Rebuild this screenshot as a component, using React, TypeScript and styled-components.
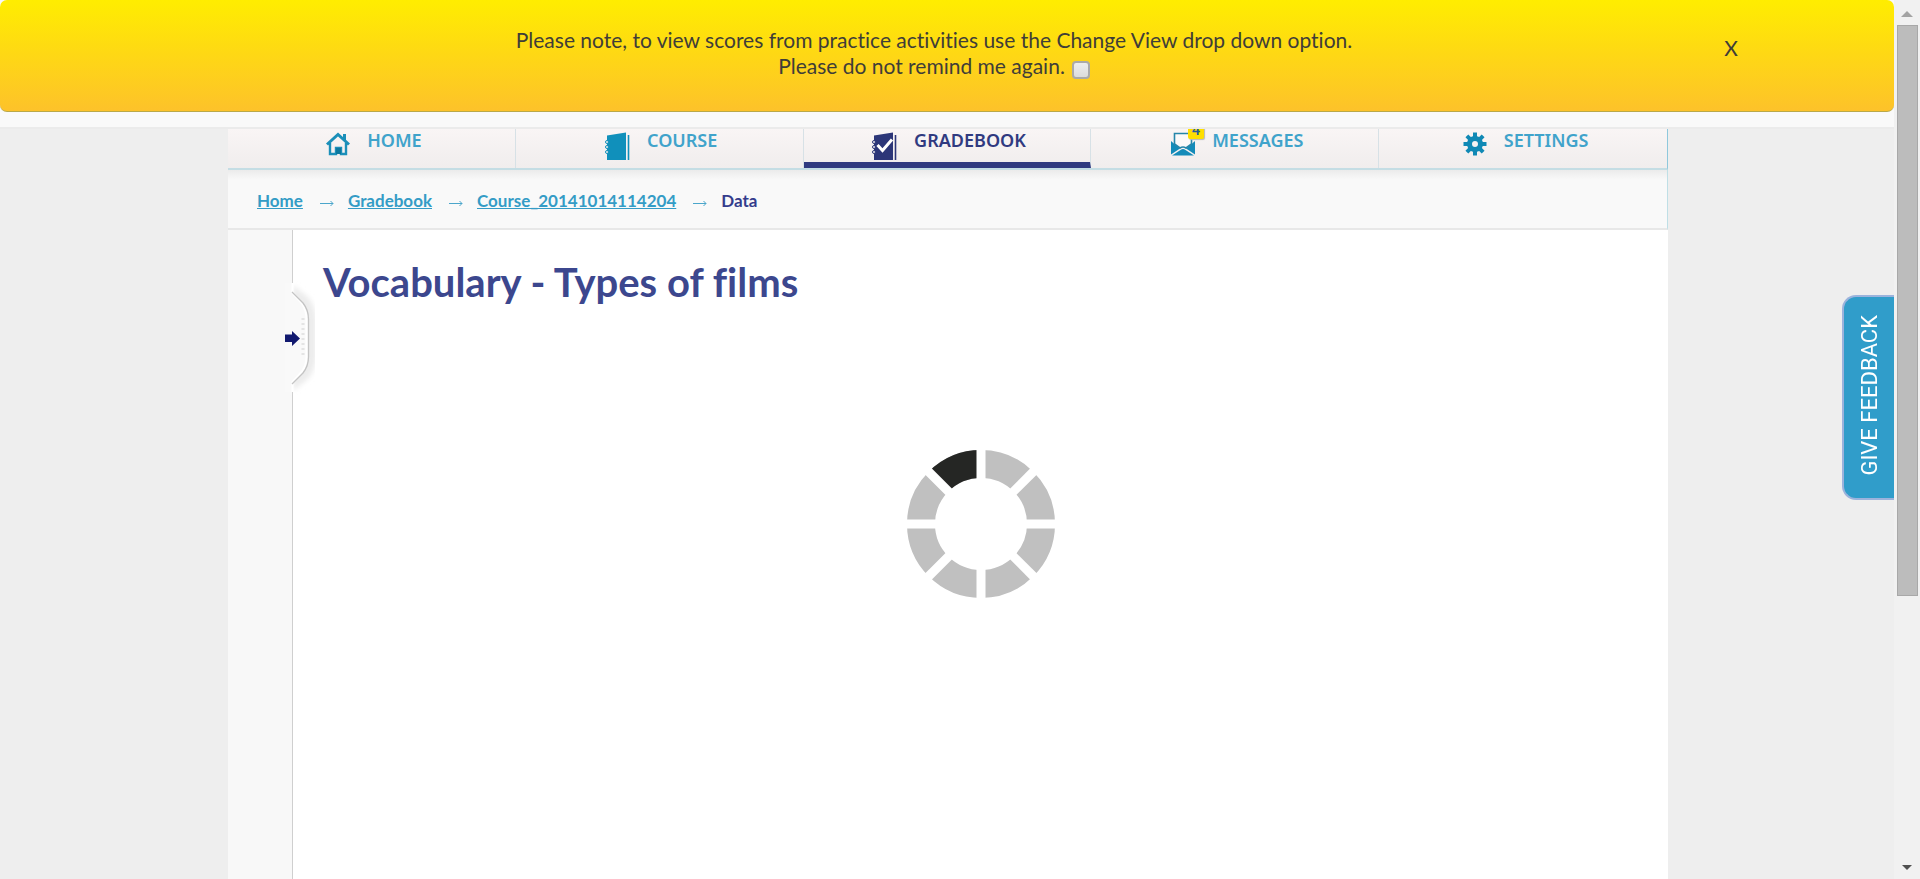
import React from 'react';
import styled, { createGlobalStyle } from 'styled-components';

const sans = 'Lato, "Noto Sans", sans-serif';

const GlobalStyle = createGlobalStyle`
  *, *::before, *::after { box-sizing: border-box; }
  html, body { margin: 0; height: 100%; }
  body {
    background: #eee;
    font-family: ${sans};
    font-variant-ligatures: none;
    overflow: hidden;
  }
`;

const Frame = styled.div`
  display: flex;
  height: 100vh;
`;

const Page = styled.div`
  position: relative;
  display: flex;
  flex-direction: column;
  flex: 1;
  min-width: 0;
  background: #eee;
`;

const TopStrip = styled.div`
  background: #f9f9f9;
  border-bottom: 2px solid #ebebeb;
  padding-bottom: 15px;
`;

const Notice = styled.section`
  position: relative;
  padding: 27px 186px 32px 160px;
  border-bottom: 1px solid #b9a849;
  border-radius: 7px;
  background: linear-gradient(#ffed00, #fdc22a);
  color: #403d38;
  font-size: 21px;
  line-height: 26px;
  text-align: center;
`;

const NoticeText = styled.p`
  margin: 0;
`;

const RemindLabel = styled.label`
  display: inline-flex;
  gap: 7px;
`;

const RemindBox = styled.input`
  appearance: none;
  align-self: flex-end;
  width: 18px;
  height: 18px;
  margin: 0;
  border: 2px solid #aaa9a8;
  border-radius: 4px;
  background: linear-gradient(#ededed, #dcdcdc);
`;

const CloseButton = styled.button`
  position: absolute;
  top: 32px;
  right: 156px;
  padding: 0;
  border: 0;
  background: none;
  color: #403d38;
  font: 21px/32px ${sans};
`;

const Container = styled.div`
  display: flex;
  flex-direction: column;
  flex: 1;
  width: 100%;
  max-width: 1442px;
  margin: 0 auto;
  padding-left: 2px;
`;

const Nav = styled.nav`
  display: grid;
  grid-template-columns: repeat(5, 1fr);
  height: 41px;
  overflow: hidden;
  border-right: 1px solid #8fc8dc;
  border-bottom: 2px solid #c4dde4;
  background: linear-gradient(#f9f5f5, #f0eded);
`;

const NavItem = styled.a<{ $active?: boolean }>`
  display: flex;
  justify-content: center;
  gap: 16px;
  padding-left: 4px;
  border-right: 1px solid #d7e1e6;
  border-bottom: ${p => (p.$active ? '6px solid #303a80' : '0')};
  color: ${p => (p.$active ? '#303a80' : '#40a3cb')};
  font-family: "Noto Sans", sans-serif;
  font-size: 18px;
  font-weight: 600;
  line-height: 22px;
  text-decoration: none;
  &:last-child { border-right: 0; }
`;

const NavIcon = styled.span`
  position: relative;
  display: block;
  width: 26px;
  height: 32px;
  svg { display: block; }
`;

const Badge = styled.span`
  position: absolute;
  top: -8px;
  left: 18px;
  width: 16px;
  height: 18px;
  border-radius: 2px;
  background: #ffdf00;
  box-shadow: 1px 1px 1px #b9b9b9;
  color: #24599b;
  font-size: 14px;
  line-height: 18px;
  text-align: center;
`;

const Crumbs = styled.nav`
  display: flex;
  align-items: center;
  gap: 14px;
  height: 60px;
  padding: 3px 0 0 29px;
  border-right: 1px solid #bfdfe6;
  border-bottom: 2px solid #e8e8e8;
  background: linear-gradient(#ebebeb, #f9f9f9 10px);
  font-size: 17px;
  line-height: 24px;
`;

const CrumbLink = styled.a`
  color: #349cc6;
  font-weight: 700;
`;

const CrumbCurrent = styled.span`
  color: #343c8c;
  font-weight: 700;
`;

const Arrow = styled.svg`
  margin: 5px 0 0 3px;
`;

const Body = styled.div`
  position: relative;
  display: flex;
  flex: 1;
  background: #fff;
`;

const Sidebar = styled.aside`
  width: 65px;
  border-right: 1px solid #cfcfcf;
  background: #f8f8f8;
`;

const Handle = styled.button`
  position: absolute;
  top: 45px;
  left: 57px;
  padding: 0;
  border: 0;
  background: none;
  svg { display: block; }
`;

const Content = styled.main`
  flex: 1;
  padding: 24px 30px;
`;

const Title = styled.h1`
  margin: 0;
  color: #3c478e;
  font-size: 40px;
  font-weight: 700;
  line-height: 56px;
`;

const Loader = styled.div`
  display: flex;
  justify-content: center;
  padding-top: 139px;
`;

const Feedback = styled.button`
  position: absolute;
  top: 295px;
  right: 0;
  width: 52px;
  height: 205px;
  padding: 0 0 0 2px;
  border: 2px solid #9bb3dc;
  border-right: 0;
  border-radius: 14px 0 0 14px;
  background: #309dca;
  color: #fff;
  font: 22px/24px Roboto, "Liberation Sans", sans-serif;
`;

const FeedbackText = styled.span`
  display: inline-block;
  writing-mode: vertical-rl;
  transform: rotate(180deg);
`;

const ScrollTrack = styled.div`
  display: flex;
  flex-direction: column;
  align-items: center;
  width: 26px;
  background: #f1f1f1;
`;

const ScrollThumb = styled.div`
  width: 21px;
  height: 65%;
  margin-bottom: auto;
  border: 1px solid #a8a8a8;
  background: #bcbcbc;
`;

const ScrollArrow = styled.svg`
  flex: none;
  width: 26px;
  height: 25px;
`;

const HomeIcon = () => (
  <svg width="26" height="32" viewBox="0 0 26 32" fill="none" stroke="#1b8fb9">
    <path d="M5 14v11h6v-6h5v6h5V14" strokeWidth="2.4" />
    <path d="M2 15.5 13 5.5l11 10" strokeWidth="3" />
    <path d="M19.5 5v6" strokeWidth="3" />
    <path d="M11 19h5v6h-5z" fill="#0c789f" stroke="none" />
  </svg>
);

const BookIcon = ({ checked = false }: { checked?: boolean }) => {
  const color = checked ? '#2c3678' : '#1090bb';
  return (
    <svg width="26" height="32" viewBox="0 0 26 32">
      <path d="M2 6.5 21 3.5V31H2z" fill={color} />
      <path d="M23.5 6v25" stroke={color} strokeWidth="1.6" />
      {[13, 18, 23].map(y => (
        <circle key={y} cx="2" cy={y} r="1.5" fill="#f6f2f2" stroke={color} strokeWidth="1" />
      ))}
      {checked && <path d="m5.500 16 5 5.500 9.500-11" fill="none" stroke="#fff" strokeWidth="3" />}
    </svg>
  );
};

const MailIcon = () => (
  <svg width="26" height="32" viewBox="0 0 26 32">
    <path d="M1 12l4.500 4L10 19.500 1 25.500zM25 12l-4.500 4-4.500 3.500 9 6z" fill="#148bb9" />
    <path d="M4.500 4.500h17V15L16 19q-3-2-6 0l-5.500-4z" fill="#fbf9f9" stroke="#2686aa" strokeWidth="1.600" />
    <path d="M2 26.500l8.500-5.500q2.500-2 5 0l8.500 5.500z" fill="#148bb9" />
  </svg>
);

const GearIcon = () => (
  <svg width="26" height="32" viewBox="0 0 26 32">
    <g transform="translate(13 15)" stroke="#1089b5" fill="none">
      {[0, 45, 90, 135].map(a => (
        <path key={a} d="M0-11.500V-5M0 5v6.500" strokeWidth="4" transform={`rotate(${a})`} />
      ))}
      <circle r="5.500" strokeWidth="5" />
    </g>
  </svg>
);

const CrumbArrow = () => (
  <Arrow width="14" height="8" viewBox="0 0 14 8" fill="none" stroke="#4ba6cb" aria-hidden="true">
    <path d="M0 4.500h13M10.500 2l2.500 2.500L10.500 7" />
  </Arrow>
);

const HandleShape = () => (
  <svg width="30" height="126" viewBox="0 0 30 126">
    <defs>
      <filter id="soft" x="-50%" y="-20%" width="200%" height="140%">
        <feGaussianBlur stdDeviation="2.500" />
      </filter>
    </defs>
    <path d="M8 10 24 23Q30 32 31 43V83Q30 94 24 103L8 116z" fill="#ececec" filter="url(#soft)" />
    <path d="M0 8h8v9L17 28Q23 35 23 44V82Q23 91 17 98L8 108v9H0z" fill="#f9f9f9" />
    <path d="M7.500 8v10L16 27.500Q21.500 35 21.500 44V82Q21.500 91 16 97.500L7.500 107v10" fill="none" stroke="#fff" strokeWidth="2" />
    <path d="M7 17 18 28Q23.500 35 23.500 44V82Q23.500 91 18 98L7 109" fill="none" stroke="#c4c4c4" strokeWidth="1.300" />
    <path d="M18 43v38" stroke="#e4e4e4" strokeWidth="3" strokeDasharray="2 3" />
    <path d="M0 59.500h7V56l8 7.500-8 7.500v-4H0z" fill="#11196f" />
  </svg>
);

const Spinner = () => (
  <svg width="150" height="150" viewBox="-75 -75 150 150" role="img" aria-label="Loading">
    <circle r="60" fill="none" stroke="#c0c0c0" strokeWidth="28" />
    <path d="M0-60A60 60 0 0 0-42.430-42.430" fill="none" stroke="#252624" strokeWidth="28" />
    {[0, 45, 90, 135].map(a => (
      <path key={a} d="M0-75V75" stroke="#fff" strokeWidth="9" transform={`rotate(${a})`} />
    ))}
  </svg>
);

const navItems = [
  { label: 'HOME', icon: <HomeIcon /> },
  { label: 'COURSE', icon: <BookIcon /> },
  { label: 'GRADEBOOK', icon: <BookIcon checked />, active: true },
  { label: 'MESSAGES', icon: <MailIcon />, count: 4 },
  { label: 'SETTINGS', icon: <GearIcon /> },
];

const crumbs = ['Home', 'Gradebook', 'Course_20141014114204'];

export default function App() {
  return (
    <>
      <GlobalStyle />
      <Frame>
        <Page>
          <TopStrip>
            <Notice>
              <NoticeText>
                Please note, to view scores from practice activities use the Change View drop down option.
              </NoticeText>
              <RemindLabel>
                Please do not remind me again.
                <RemindBox type="checkbox" />
              </RemindLabel>
              <CloseButton type="button" aria-label="Close">X</CloseButton>
            </Notice>
          </TopStrip>
          <Container>
            <Nav>
              {navItems.map(item => (
                <NavItem key={item.label} href="#" $active={item.active}>
                  <NavIcon>
                    {item.icon}
                    {item.count && <Badge>{item.count}</Badge>}
                  </NavIcon>
                  {item.label}
                </NavItem>
              ))}
            </Nav>
            <Crumbs aria-label="Breadcrumb">
              {crumbs.map(name => (
                <React.Fragment key={name}>
                  <CrumbLink href="#">{name}</CrumbLink>
                  <CrumbArrow />
                </React.Fragment>
              ))}
              <CrumbCurrent>Data</CrumbCurrent>
            </Crumbs>
            <Body>
              <Sidebar />
              <Handle type="button" aria-label="Open side panel">
                <HandleShape />
              </Handle>
              <Content>
                <Title>Vocabulary - Types of films</Title>
                <Loader>
                  <Spinner />
                </Loader>
              </Content>
            </Body>
          </Container>
          <Feedback type="button">
            <FeedbackText>GIVE FEEDBACK</FeedbackText>
          </Feedback>
        </Page>
        <ScrollTrack aria-hidden="true">
          <ScrollArrow viewBox="0 0 26 25">
            <path d="M7 17 13 11l6 6z" fill="#a3a3a3" />
          </ScrollArrow>
          <ScrollThumb />
          <ScrollArrow viewBox="0 0 26 25">
            <path d="M8 11h10l-5 5z" fill="#505050" />
          </ScrollArrow>
        </ScrollTrack>
      </Frame>
    </>
  );
}
